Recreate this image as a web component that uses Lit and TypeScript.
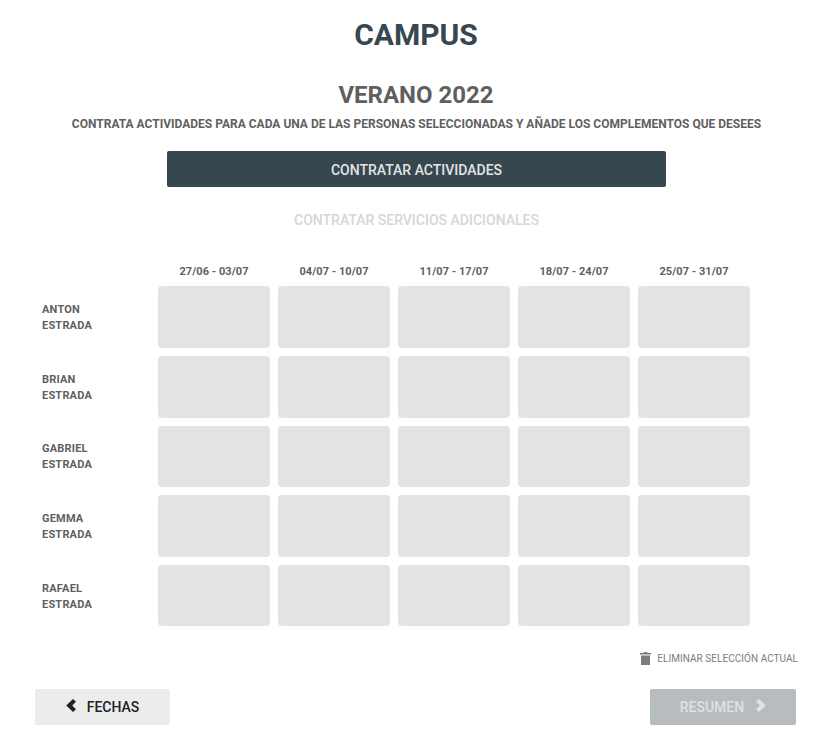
import { LitElement, html, css } from "lit";
import { customElement } from "lit/decorators.js";

const weeks = ["27/06 - 03/07", "04/07 - 10/07", "11/07 - 17/07", "18/07 - 24/07", "25/07 - 31/07"];
const people = ["ANTON", "BRIAN", "GABRIEL", "GEMMA", "RAFAEL"];

@customElement("app-root")
export class AppRoot extends LitElement {
  static styles = css`
    :host { display: block; width: 838px; height: 733px; overflow: hidden; background: #fff; font-family: Roboto, sans-serif; }
    .page { width: 833px; display: flex; flex-direction: column; align-items: center; }
    h1 { margin: 17px 1px 0 0; font-size: 30px; line-height: 36px; font-weight: 700; color: #37474f; }
    h2 { margin: 27px 1px 0 0; font-size: 24px; line-height: 30px; font-weight: 700; color: #5f5f5f; }
    .sub { margin: 6px 0 0; font-size: 12px; line-height: 16px; font-weight: 700; color: #5f5f5f; }
    .primary { margin-top: 19px; width: 499px; height: 36px; padding-top: 1px; box-sizing: border-box; border-radius: 2px; background: #37474f; color: #e3e4e6; font-size: 14px; font-weight: 500; display: flex; align-items: center; justify-content: center; }
    .secondary { margin-top: 25px; font-size: 14px; line-height: 16px; font-weight: 500; color: #d6d6d6; }
    .grid { align-self: flex-start; margin: 36.3px 0 0 42px; display: grid; grid-template-columns: 108px repeat(5, 112px); column-gap: 8px; grid-template-rows: 14px repeat(5, 61.64px); row-gap: 8px; }
    .week { font-size: 11px; line-height: 14px; padding-top: 1px; font-weight: 700; color: #5f5f5f; text-align: center; letter-spacing: 0.05px; }
    .name { font-size: 11px; line-height: 16px; padding-top: 2px; font-weight: 700; color: #5f5f5f; align-self: center; letter-spacing: 0.2px; }
    .cell { background: #e2e3e5; border-radius: 4px; }
    .remove { align-self: flex-end; margin: 25.5px 35px 0 0; display: flex; align-items: center; gap: 6px; font-size: 10px; line-height: 14px; color: #7c7c7c; letter-spacing: 0.04px; }
    .remove svg { display: block; }
    .footer { align-self: stretch; margin: 23px 37px 0 35px; display: flex; justify-content: space-between; }
    .btn { height: 36px; border-radius: 2px; display: flex; align-items: center; justify-content: center; font-size: 14px; font-weight: 500; }
    .btn svg { margin-top: -2px; }
    .back { width: 135px; background: #ececec; color: #222; gap: 11px; }
    .next { width: 146px; background: #b7bcbf; color: #dfe1e3; gap: 12px; }
    svg { fill: currentColor; }
  `;

  render() {
    return html`<div class="page">
      <h1>CAMPUS</h1>
      <h2>VERANO 2022</h2>
      <p class="sub">CONTRATA ACTIVIDADES PARA CADA UNA DE LAS PERSONAS SELECCIONADAS Y AÑADE LOS COMPLEMENTOS QUE DESEES</p>
      <div class="primary">CONTRATAR ACTIVIDADES</div>
      <div class="secondary">CONTRATAR SERVICIOS ADICIONALES</div>
      <div class="grid">
        <div></div>
        ${weeks.map((w) => html`<div class="week">${w}</div>`)}
        ${people.map((p) => html`
          <div class="name">${p}<br />ESTRADA</div>
          ${weeks.map(() => html`<div class="cell"></div>`)}
        `)}
      </div>
      <div class="remove">
        <svg width="11" height="13" viewBox="0 0 11 13"><path d="M4 0h3l.5 1H11v1.5H0V1h3.500zM1 3.500h9V13H1z" /></svg>
        <span>ELIMINAR SELECCIÓN ACTUAL</span>
      </div>
      <div class="footer">
        <div class="btn back">
          <svg width="10" height="13" viewBox="0 0 10 13"><path d="M7 0 10 2.800 6.200 6.500 10 10.200 7 13 .2 6.500z" /></svg>
          <span>FECHAS</span>
        </div>
        <div class="btn next">
          <span>RESUMEN</span>
          <svg width="10" height="13" viewBox="0 0 10 13"><path d="M3 0 0 2.800 3.800 6.500 0 10.200 3 13l6.800-6.500z" /></svg>
        </div>
      </div>
    </div>`;
  }
}
